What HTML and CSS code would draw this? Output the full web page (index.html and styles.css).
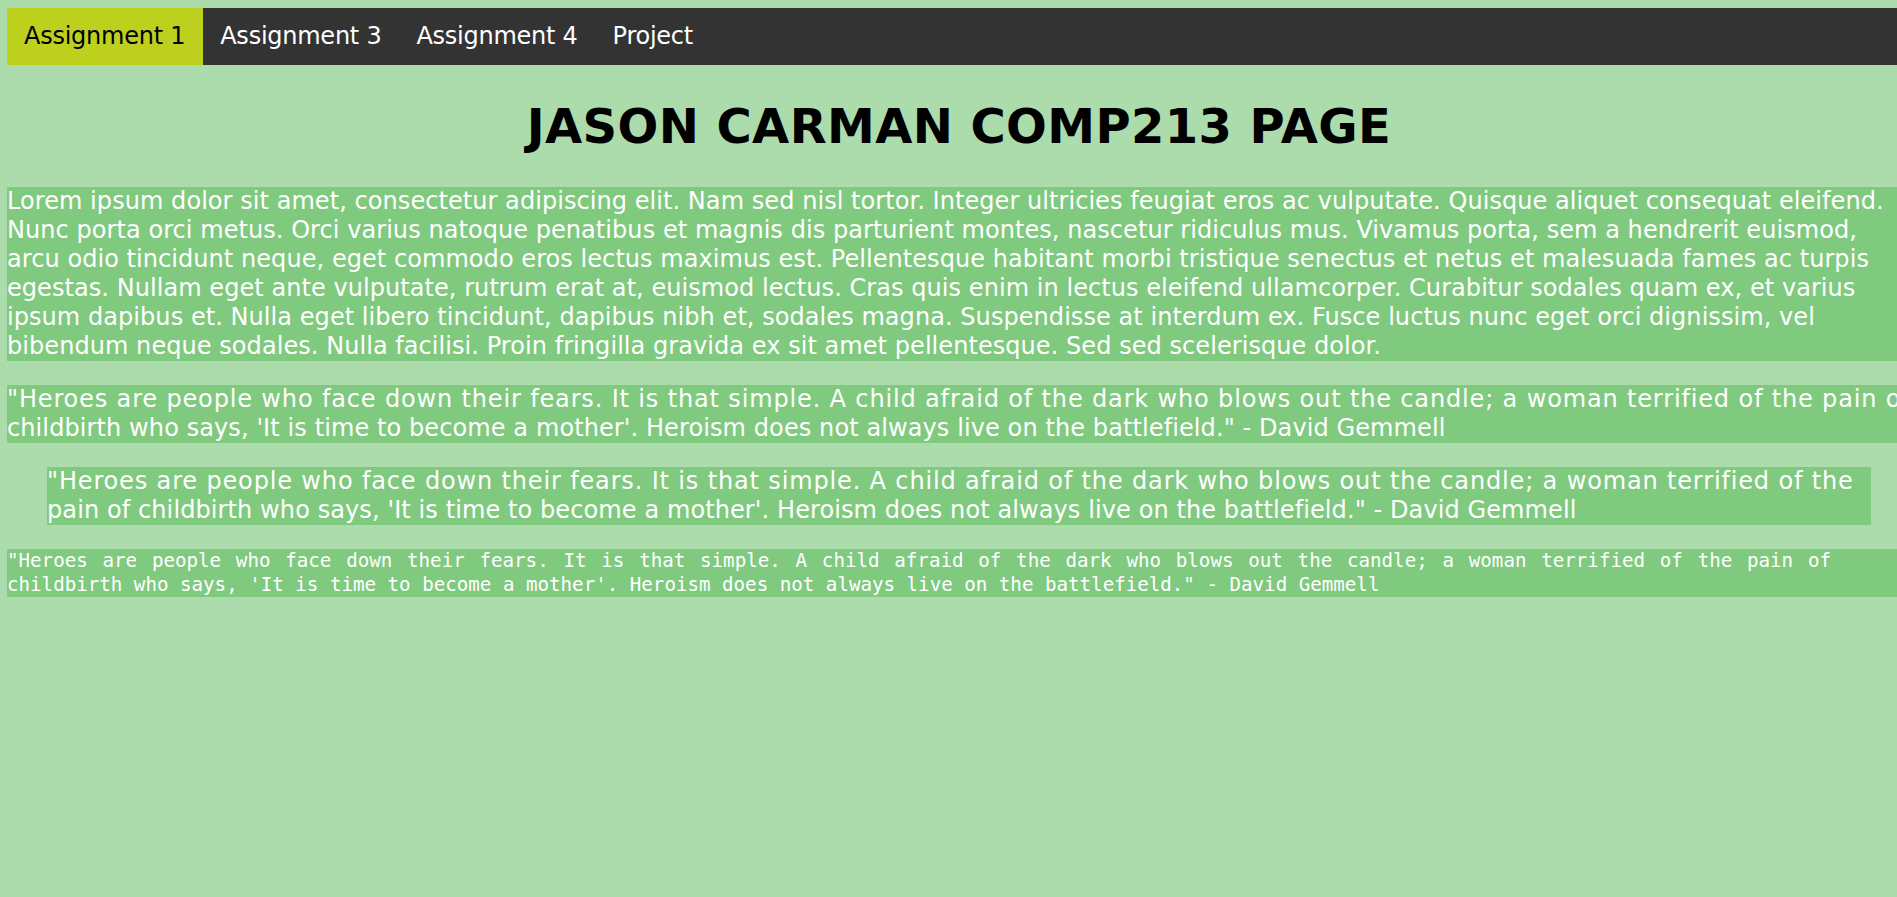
FILE: index.html
```html
<!DOCTYPE html>
<html lang="en">
<head>
<meta charset="utf-8">
<title>Jason Carman COMP213 Page</title>
<link rel="stylesheet" href="styles.css">
</head>
<body>
<div class="page">
  <nav class="topnav">
    <a class="nav-link active" href="#">Assignment 1</a>
    <a class="nav-link" href="#">Assignment 3</a>
    <a class="nav-link" href="#">Assignment 4</a>
    <a class="nav-link" href="#">Project</a>
  </nav>
  <h1 class="title">JASON CARMAN COMP213 PAGE</h1>
  <p class="block lorem">Lorem ipsum dolor sit amet, consectetur adipiscing elit. Nam sed nisl tortor. Integer ultricies feugiat eros ac vulputate. Quisque aliquet consequat eleifend. Nunc porta orci metus. Orci varius natoque penatibus et magnis dis parturient montes, nascetur ridiculus mus. Vivamus porta, sem a hendrerit euismod, arcu odio tincidunt neque, eget commodo eros lectus maximus est. Pellentesque habitant morbi tristique senectus et netus et malesuada fames ac turpis egestas. Nullam eget ante vulputate, rutrum erat at, euismod lectus. Cras quis enim in lectus eleifend ullamcorper. Curabitur sodales quam ex, et varius ipsum dapibus et. Nulla eget libero tincidunt, dapibus nibh et, sodales magna. Suspendisse at interdum ex. Fusce luctus nunc eget orci dignissim, vel bibendum neque sodales. Nulla facilisi. Proin fringilla gravida ex sit amet pellentesque. Sed sed scelerisque dolor.</p>
  <p class="block quote">"Heroes are people who face down their fears. It is that simple. A child afraid of the dark who blows out the candle; a woman terrified of the pain of childbirth who says, 'It is time to become a mother'. Heroism does not always live on the battlefield." - David Gemmell</p>
  <blockquote class="block quote indented">"Heroes are people who face down their fears. It is that simple. A child afraid of the dark who blows out the candle; a woman terrified of the pain of childbirth who says, 'It is time to become a mother'. Heroism does not always live on the battlefield." - David Gemmell</blockquote>
  <p class="block mono">"Heroes are people who face down their fears. It is that simple. A child afraid of the dark who blows out the candle; a woman terrified of the pain of childbirth who says, 'It is time to become a mother'. Heroism does not always live on the battlefield." - David Gemmell</p>
</div>
</body>
</html>
```
FILE: styles.css
```css
html {
  overflow-x: hidden;
  background: #acdcac;
}

body {
  margin: 8px 0 8px 7px;
  background: #acdcac;
  font-family: "DejaVu Sans", Verdana, sans-serif;
  font-size: 24px;
  line-height: 29px;
}

.page {
  width: 1904px;
}

.topnav {
  display: flex;
  background: #333333;
}

.nav-link {
  display: block;
  padding: 14px 18px 14px 17px;
  color: #ffffff;
  text-decoration: none;
  font-size: 24px;
  line-height: 29px;
  letter-spacing: -0.25px;
}

.nav-link.active {
  background: #bdd01e;
  color: #000000;
}

.title {
  margin: 32px 0;
  font-size: 48px;
  line-height: 58px;
  font-weight: bold;
  letter-spacing: 0.4px;
  text-align: center;
  color: #000000;
}

.block {
  margin: 24px 0;
  background: #80ca80;
  color: #ffffff;
}

.lorem {
  padding-right: 12px;
  letter-spacing: 0.06px;
}

.quote {
  letter-spacing: 0.1px;
}

.quote::first-line {
  letter-spacing: 0.85px;
}

.indented {
  margin: 24px 40px;
}

.mono {
  padding-right: 80px;
  font-family: "DejaVu Sans Mono", "Liberation Mono", monospace;
  font-size: 19.17px;
  line-height: 24px;
  text-align: justify;
}
```
